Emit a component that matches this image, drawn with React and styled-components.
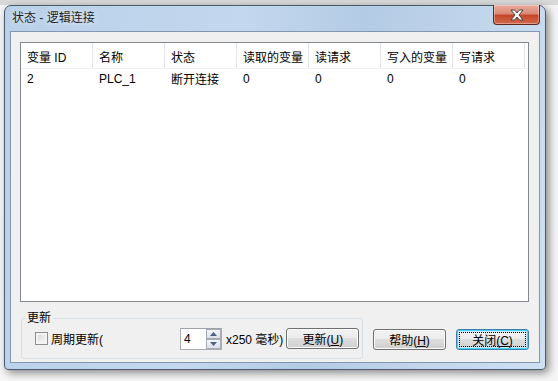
import styled, { createGlobalStyle } from "styled-components";

const GlobalStyle = createGlobalStyle`
  html, body {
    margin: 0;
    padding: 0;
    background: #f3f3f3;
  }
  body {
    font-family: "Liberation Sans", "Noto Sans CJK SC", sans-serif;
    font-size: 12px;
    color: #000;
  }
`;

const columns = ["变量 ID", "名称", "状态", "读取的变量", "读请求", "写入的变量", "写请求"];
const rows = [["2", "PLC_1", "断开连接", "0", "0", "0", "0"]];

export default function App() {
  return (
    <>
      <GlobalStyle />
      <Desktop>
        <Window>
          <TitleBar>
            <Title>状态 - 逻辑连接</Title>
            <CloseButton>
              <svg width="16" height="12" viewBox="0 0 16 12">
                <path
                  d="M2 1 L5.5 1 L8 4 L10.5 1 L14 1 L10 6 L14 11 L10.5 11 L8 8 L5.5 11 L2 11 L6 6 Z"
                  fill="#fff"
                  stroke="#444"
                  strokeWidth="1"
                  strokeLinejoin="round"
                />
              </svg>
            </CloseButton>
          </TitleBar>
          <Frame>
            <Client>
              <ListBox>
                <HeaderRow>
                  {columns.map((c) => (
                    <HeaderCell key={c}>{c}</HeaderCell>
                  ))}
                </HeaderRow>
                {rows.map((r, i) => (
                  <Row key={i}>
                    {r.map((v, j) => (
                      <Cell key={j}>{v}</Cell>
                    ))}
                  </Row>
                ))}
              </ListBox>
              <BottomRow>
                <Group>
                  <Legend>更新</Legend>
                  <CheckWrap>
                    <CheckBox />
                    <span>周期更新(</span>
                  </CheckWrap>
                  <Spin>
                    <SpinInput>4</SpinInput>
                    <SpinButtons>
                      <SpinButton>
                        <svg width="7" height="4" viewBox="0 0 7 4">
                          <path d="M0 4 L3.5 0 L7 4 Z" fill="#4d6185" />
                        </svg>
                      </SpinButton>
                      <SpinButton>
                        <svg width="7" height="4" viewBox="0 0 7 4">
                          <path d="M0 0 L3.5 4 L7 0 Z" fill="#4d6185" />
                        </svg>
                      </SpinButton>
                    </SpinButtons>
                  </Spin>
                  <Unit>x250 毫秒)</Unit>
                  <Button>
                    更新(<u>U</u>)
                  </Button>
                </Group>
                <Button $gap>
                  帮助(<u>H</u>)
                </Button>
                <Button $gap $focused>
                  关闭(<u>C</u>)
                </Button>
              </BottomRow>
            </Client>
          </Frame>
        </Window>
      </Desktop>
    </>
  );
}

const Desktop = styled.div`
  width: 558px;
  height: 381px;
  padding: 5px 0 0 4px;
  box-sizing: border-box;
  background: linear-gradient(to bottom, #d9d9d9 0, #d9d9d9 5px, #f6f6f6 5px);
  overflow: hidden;
`;

const Window = styled.div`
  width: 542px;
  height: 365px;
  box-sizing: border-box;
  border: 1px solid #4a5a6c;
  border-radius: 7px 7px 4px 4px;
  background: linear-gradient(100deg, #b9d0e9 0%, #c3d8ee 40%, #b4cbe5 60%, #cfe0f2 100%);
  box-shadow: 3px 3px 8px rgba(0, 0, 0, 0.45);
  display: flex;
  flex-direction: column;
`;

const TitleBar = styled.div`
  height: 25px;
  display: flex;
  align-items: flex-start;
  padding-left: 7px;
  padding-right: 5px;
`;

const Title = styled.div`
  line-height: 25px;
  font-size: 12px;
  color: #1e1e1e;
  text-shadow: 0 0 6px rgba(255, 255, 255, 0.9);
`;

const CloseButton = styled.div`
  margin-left: auto;
  margin-top: -1px;
  width: 45px;
  height: 19px;
  border: 1px solid #5a2a22;
  border-top: none;
  border-radius: 0 0 4px 4px;
  background: linear-gradient(to bottom, #e9a99a 0%, #dc8a77 45%, #c6462d 55%, #d2694c 100%);
  box-shadow: inset 0 0 0 1px rgba(255, 255, 255, 0.35);
  display: flex;
  align-items: center;
  justify-content: center;
`;

const Frame = styled.div`
  flex: 1;
  padding: 0 5px 6px 5px;
  display: flex;
`;

const Client = styled.div`
  flex: 1;
  border: 1px solid #8197b0;
  background: #f0f0f0;
  padding: 10px 10px 3px 9px;
  display: flex;
  flex-direction: column;
`;

const ListBox = styled.div`
  height: 260px;
  box-sizing: border-box;
  border: 1px solid #828790;
  background: #fff;
`;

const HeaderRow = styled.div`
  display: flex;
  height: 25px;
  border-bottom: 1px solid #eef0f3;
`;

const HeaderCell = styled.div`
  width: 72px;
  box-sizing: border-box;
  padding: 2px 0 0 6px;
  border-right: 1px solid #e3e4e6;
  display: flex;
  align-items: center;
  white-space: nowrap;
`;

const Row = styled.div`
  display: flex;
  height: 19px;
  align-items: center;
`;

const Cell = styled.div`
  width: 72px;
  box-sizing: border-box;
  padding-left: 6px;
  white-space: nowrap;
`;

const BottomRow = styled.div`
  display: flex;
  align-items: flex-start;
  margin-top: 9px;
`;

const Group = styled.fieldset`
  margin: 0 0 0 1px;
  width: 342px;
  height: 48px;
  box-sizing: border-box;
  border: 1px solid #d5dfe5;
  border-radius: 3px;
  padding: 0 0 6px 13px;
  display: flex;
  align-items: center;
`;

const Legend = styled.legend`
  padding: 0 2px;
  margin-left: -10px;
  line-height: 14px;
`;

const CheckWrap = styled.label`
  width: 145px;
  display: flex;
  align-items: center;
  gap: 3px;
`;

const CheckBox = styled.span`
  width: 13px;
  height: 13px;
  box-sizing: border-box;
  border: 1px solid #8e8f8f;
  background: linear-gradient(135deg, #d6d6d6 0%, #f4f4f4 80%, #ffffff 100%);
  box-shadow: inset 0 0 0 2px #f4f4f4;
`;

const Spin = styled.div`
  display: flex;
  height: 22px;
  width: 42px;
  box-sizing: border-box;
  border: 1px solid #abadb3;
  border-top-color: #a0a3aa;
  background: #fff;
`;

const SpinInput = styled.div`
  flex: 1;
  padding-left: 3px;
  line-height: 20px;
`;

const SpinButtons = styled.div`
  width: 15px;
  display: flex;
  flex-direction: column;
`;

const SpinButton = styled.div`
  flex: 1;
  border: 1px solid #a3aab4;
  background: linear-gradient(to bottom, #f4f5f7, #dde1e7);
  display: flex;
  align-items: center;
  justify-content: center;
`;

const Unit = styled.span`
  margin-left: 4px;
  white-space: nowrap;
`;

const Button = styled.button`
  position: relative;
  width: 73px;
  height: 21px;
  margin: ${(p) => (p.$gap ? "18px 0 0 10px" : "0 0 0 3px")};
  padding: 0;
  font: inherit;
  color: #000;
  border: 1px solid ${(p) => (p.$focused ? "#3c7fb1" : "#707070")};
  border-radius: 3px;
  background: linear-gradient(to bottom, #f2f2f2 0%, #ebebeb 50%, #dddddd 50%, #cfcfcf 100%);
  box-shadow: ${(p) =>
    p.$focused ? "inset 0 0 0 1px #48d1f8, inset 0 0 0 2px #c8ecfb" : "inset 0 0 0 1px #fcfcfc"};

  u {
    text-decoration: underline;
  }

  &::after {
    content: "";
    display: ${(p) => (p.$focused ? "block" : "none")};
    position: absolute;
    inset: 2px;
    border: 1px dotted #000;
  }
`;
